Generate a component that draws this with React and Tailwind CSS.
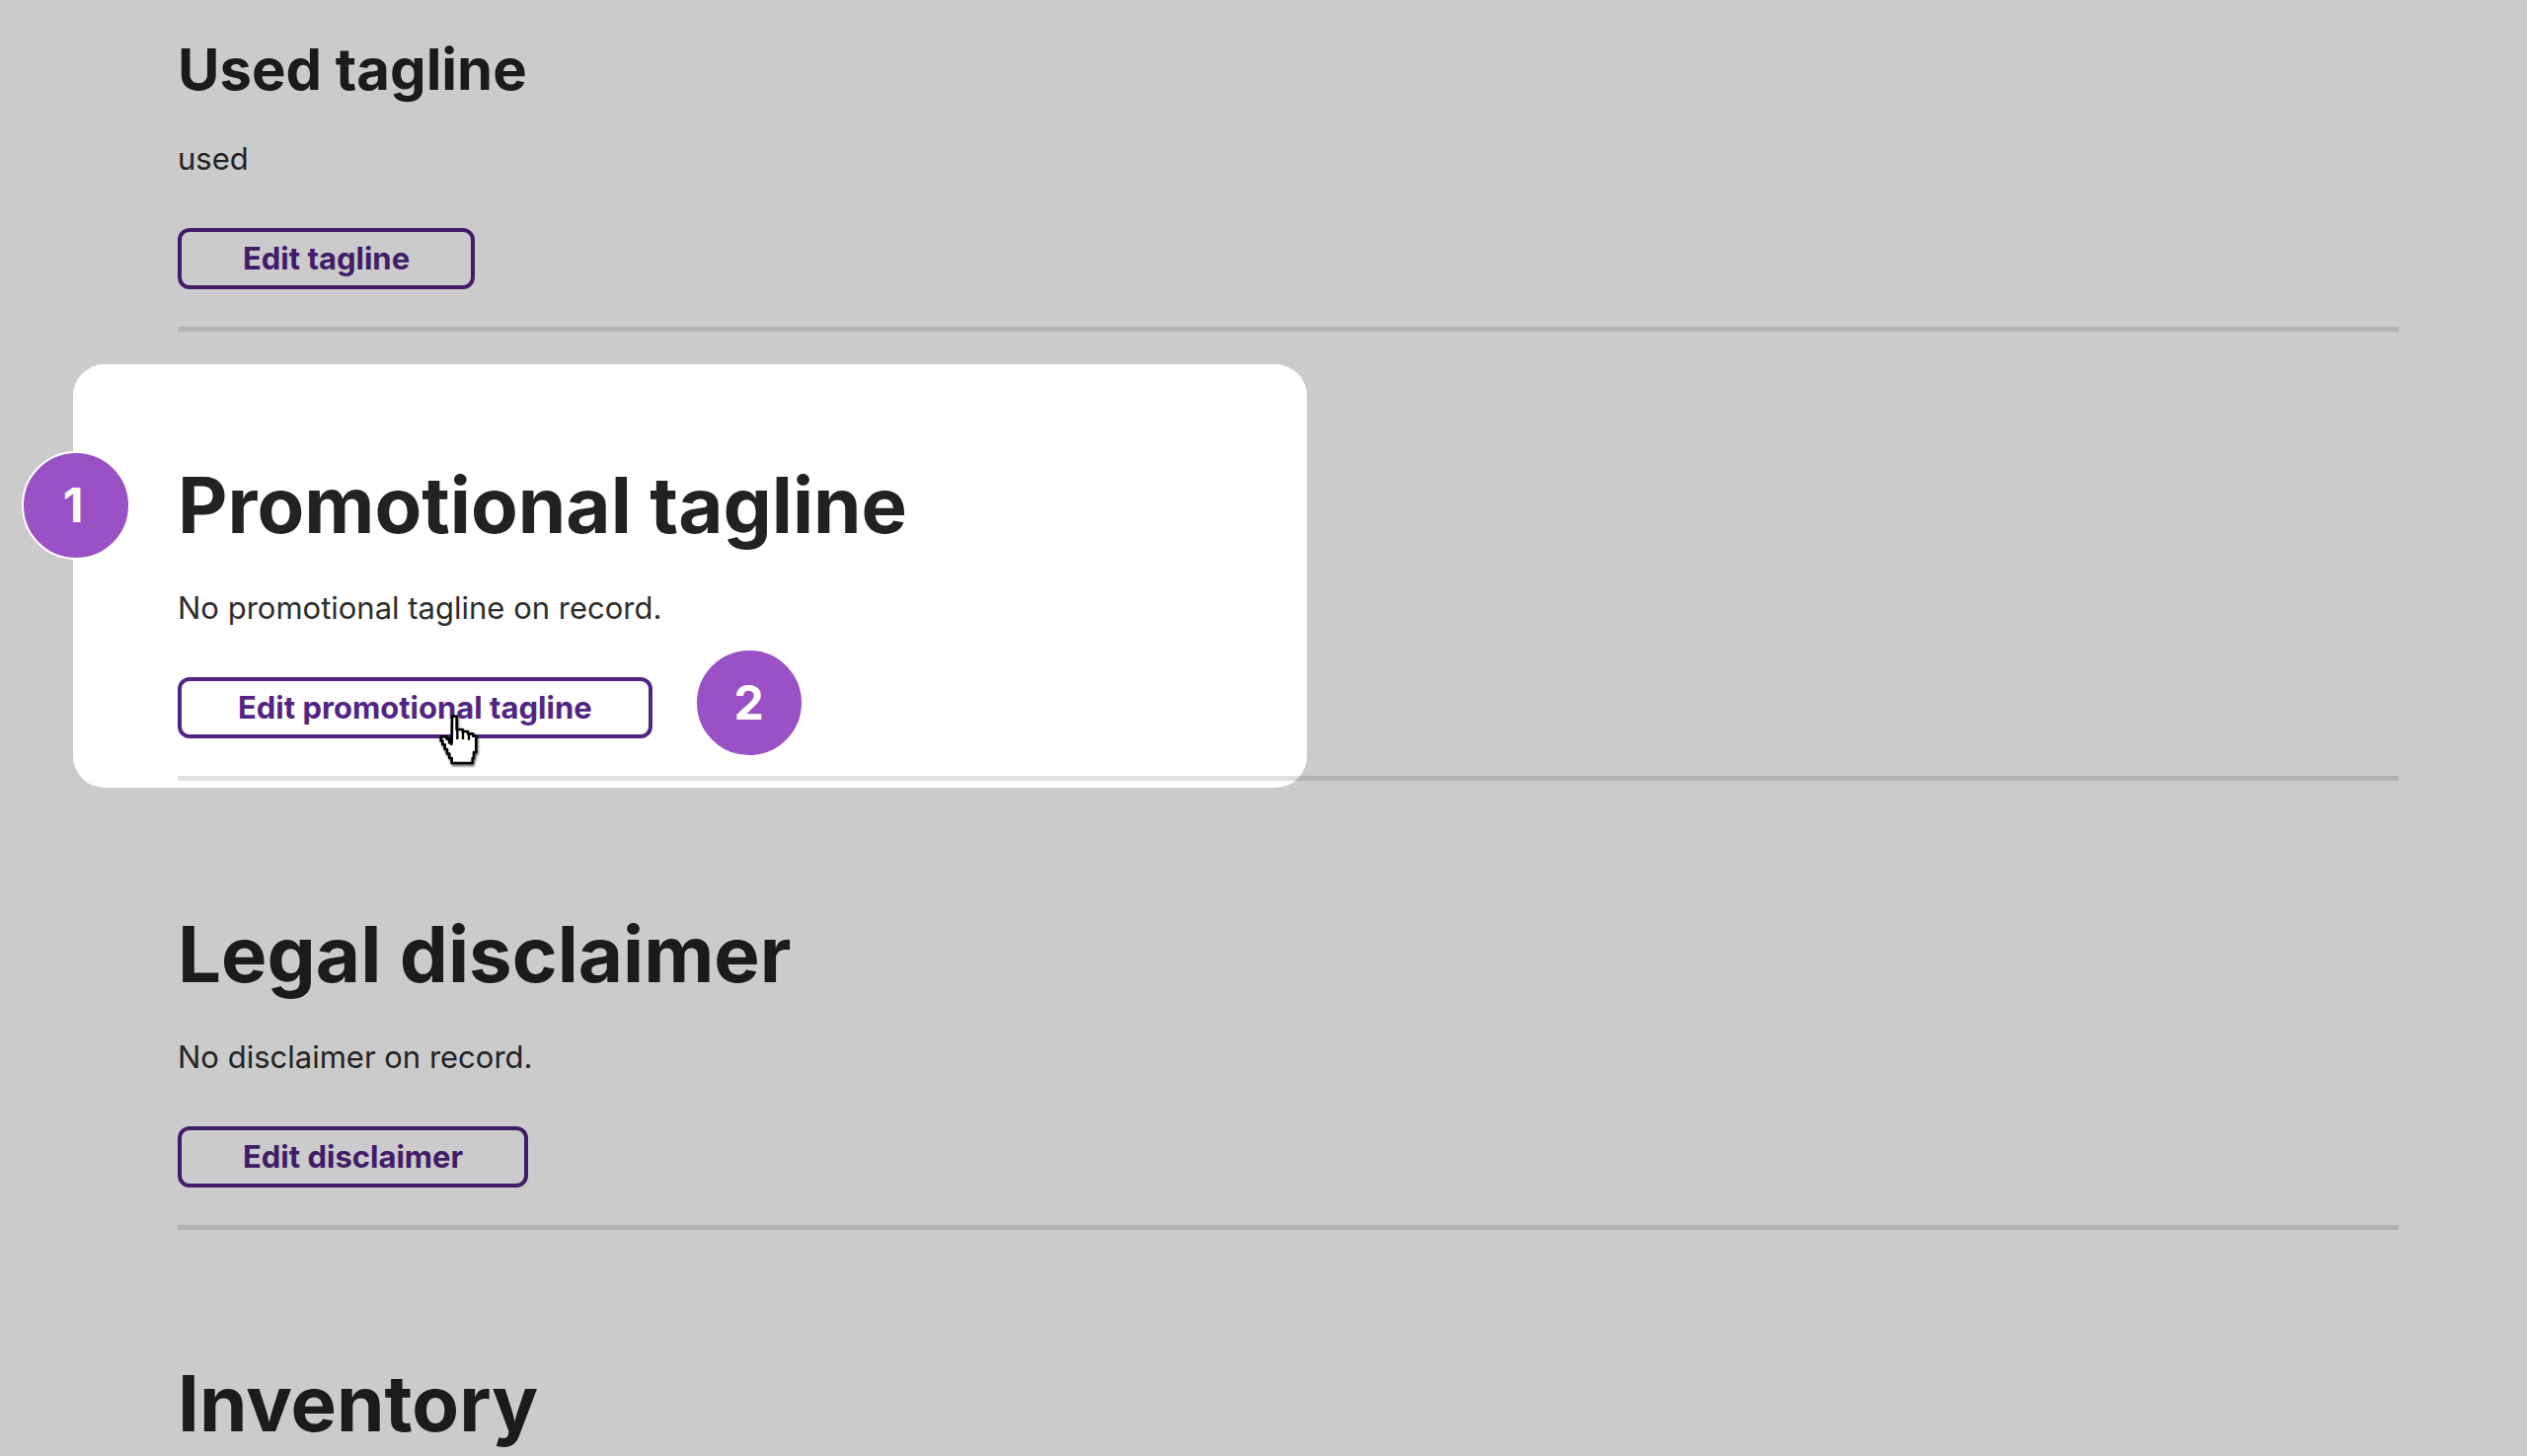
const sections = [
  { title: "Promotional tagline", text: "No promotional tagline on record.", action: "Edit promotional tagline", spotlight: true },
  { title: "Legal disclaimer", text: "No disclaimer on record.", action: "Edit disclaimer" },
];

function EditButton({ className = "px-[62px]", children }) {
  return (
    <button
      type="button"
      className={`h-[62px] cursor-pointer rounded-xl border-4 border-[#522583] pb-0.5 text-[31px] leading-none font-bold text-[#522583] ${className}`}
    >
      {children}
    </button>
  );
}

function Badge({ className, children }) {
  return (
    <span
      className={`absolute z-20 flex size-[110px] items-center justify-center rounded-full border-2 border-white bg-[#9b51c6] text-5xl font-bold text-white ${className}`}
    >
      {children}
    </span>
  );
}

function HandCursor() {
  return (
    <svg
      viewBox="132 100 126 162"
      className="pointer-events-none absolute top-[37px] left-[264px] z-20 h-[54px] w-[42px] overflow-visible drop-shadow-[1px_2px_1px_rgba(0,0,0,0.6)]"
      aria-hidden="true"
    >
      <path
        d="M174 108H188V148H206V154H222V161H238V168H247V217H240V235H236V250H173V235H166V222H159V208H152V194H145V182H140V170H158V177H165V188H173Z"
        fill="#fff"
        stroke="#000"
        strokeWidth="8"
        strokeLinejoin="round"
      />
      <path d="M190 148V178M207 155V178M225 162V180M172 170V196" stroke="#000" strokeWidth="7" />
    </svg>
  );
}

export default function App() {
  return (
    <main className="relative min-h-screen overflow-hidden bg-white pr-[130px] pl-[180px] font-['Inter',sans-serif] text-[#222222]">
      <section className="border-b-[5px] border-[#dfe2e1] pt-[35px] pb-[38px]">
        <h2 className="text-[58px] leading-[70px] font-bold">Used tagline</h2>
        <p className="mt-[34px] mb-12 text-[31px] leading-[44px] text-[#2d2d2d]">used</p>
        <EditButton>Edit tagline</EditButton>
      </section>

      {sections.map((section) => (
        <section key={section.title} className="relative border-b-[5px] border-[#dfe2e1] pt-32 pb-[38px]">
          <h1 className="text-[78px] leading-[96px] font-bold">{section.title}</h1>
          <p className="mt-[34px] mb-12 text-[31px] leading-[44px] text-[#2d2d2d]">{section.text}</p>
          <div className="relative flex w-fit">
            <EditButton className={section.spotlight ? "px-[57px]" : "px-[62px]"}>{section.action}</EditButton>
            {section.spotlight && (
              <>
                <HandCursor />
                <Badge className="-top-[29px] left-full ml-[43px]">2</Badge>
              </>
            )}
          </div>
          {section.spotlight && (
            <>
              {/* the shadow dims everything outside the highlighted area */}
              <div className="pointer-events-none absolute top-[33px] -left-[106px] z-10 h-[429px] w-[1250px] rounded-[32px] shadow-[0_0_0_3000px_rgba(0,0,0,0.204)]" />
              <Badge className="top-[121px] -left-[158px] pr-1.5">1</Badge>
            </>
          )}
        </section>
      ))}

      <section className="pt-32">
        <h1 className="text-[78px] leading-[96px] font-bold">Inventory</h1>
      </section>
    </main>
  );
}
